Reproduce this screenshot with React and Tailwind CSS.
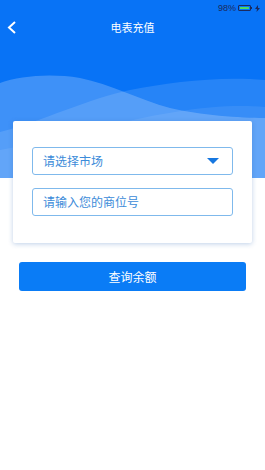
import React from 'react';

function Waves() {
  return (
    <svg className="absolute inset-0" width="265" height="178" viewBox="0 0 265 178">
      <path d="M0 83 C20 76 50 73 80 78 C110 84 140 100 170 108 C200 115 240 118 265 118 L265 178 L0 178 Z" fill="#ffffff" fillOpacity="0.22" />
      <path d="M0 132 C40 122 90 98 130 90 C170 82 220 76 265 80 L265 178 L0 178 Z" fill="#ffffff" fillOpacity="0.12" />
      <path d="M0 150 C60 140 120 120 175 112 C210 106 240 105 265 107 L265 178 L0 178 Z" fill="#ffffff" fillOpacity="0.08" />
    </svg>
  );
}

function Field({ text, arrow }) {
  return (
    <div className="h-[28px] flex items-center justify-between pl-[10px] pr-[13px] border border-[#7fb9ec] rounded-[3px]">
      <span className="text-[12px] text-[#3c8bd9]">{text}</span>
      {arrow && (
        <svg width="12" height="6" viewBox="0 0 12 6">
          <path d="M0 0 H12 L6 6 Z" fill="#1677e0" />
        </svg>
      )}
    </div>
  );
}

export default function App() {
  return (
    <div className="relative w-[265px] h-[470px] bg-white overflow-hidden font-['Noto_Sans_CJK_SC',sans-serif]">
      <div className="absolute inset-x-0 top-0 h-[178px] bg-[#0873f6]">
        <Waves />
      </div>

      <div className="relative flex flex-col">
        {/* status bar */}
        <div className="h-[16px] flex items-center justify-end pr-[5px] gap-[2px]">
          <span className="text-[9px] leading-none text-[#1b2a5e] font-['Liberation_Sans',sans-serif]">98%</span>
          <div className="flex items-center">
            <div className="w-[13px] h-[6px] border border-[#1b2a5e] rounded-[1px] p-[1px]">
              <div className="w-full h-full bg-[#4cd964]" />
            </div>
            <div className="w-[1px] h-[2px] bg-[#1b2a5e]" />
          </div>
          <svg width="5" height="7" viewBox="0 0 5 7" className="ml-[1px]">
            <path d="M3 0 L0 4 H2 L1.5 7 L5 3 H3 Z" fill="#1b2a5e" />
          </svg>
        </div>

        {/* nav */}
        <div className="h-[22px] flex items-center relative">
          <svg width="10" height="13" viewBox="0 0 10 13" className="absolute left-[7px]">
            <path d="M8 1 L2 6.5 L8 12" fill="none" stroke="#ffffff" strokeWidth="2" />
          </svg>
          <div className="flex-1 text-center text-[11px] text-white">电表充值</div>
        </div>

        {/* card */}
        <div className="mx-[13px] mt-[83px] h-[122px] bg-white rounded-[2px] shadow-[0_1px_5px_rgba(40,100,180,0.3)] px-[19px] pt-[26px] flex flex-col gap-[13px]">
          <Field text="请选择市场" arrow />
          <Field text="请输入您的商位号" />
        </div>

        {/* button */}
        <button className="mx-[19px] mt-[19px] h-[29px] rounded-[3px] bg-[#0a7cf6] text-white text-[12px]">
          查询余额
        </button>
      </div>
    </div>
  );
}
